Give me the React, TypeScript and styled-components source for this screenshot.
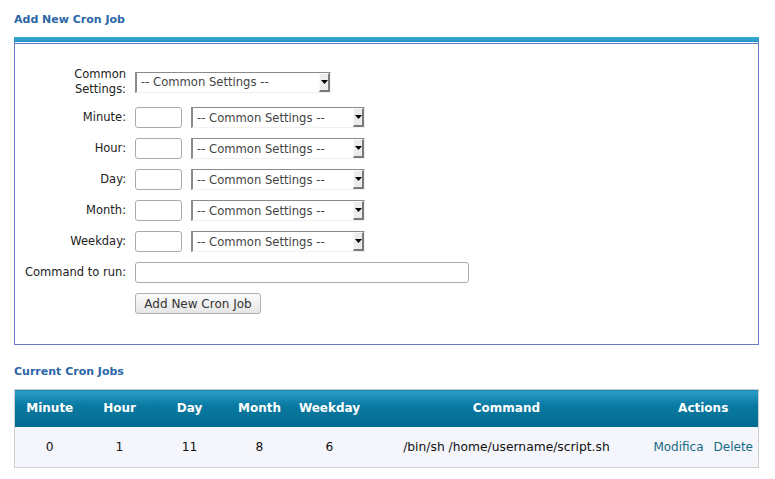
import React from 'react';
import styled, { createGlobalStyle } from 'styled-components';

const GlobalStyle = createGlobalStyle`
  body {
    margin: 0;
    background: #fff;
    font-family: "DejaVu Sans", Verdana, sans-serif;
    font-size: 11px;
    color: #222;
  }
`;

const FIELDS = ['Minute', 'Hour', 'Day', 'Month', 'Weekday'];

const JOBS = [
  { minute: '0', hour: '1', day: '11', month: '8', weekday: '6', command: '/bin/sh /home/username/script.sh' },
];

const Select = ({ width }: { width: number }) => (
  <SelectBox $width={width}>
    <SelectText>-- Common Settings --</SelectText>
    <ArrowButton>
      <svg width="7" height="4" viewBox="0 0 7 4">
        <path d="M0 0h7L3.5 4z" fill="#000" />
      </svg>
    </ArrowButton>
  </SelectBox>
);

const App = () => {
  return (
    <Page>
      <GlobalStyle />
      <SectionTitle>Add New Cron Job</SectionTitle>
      <Panel>
        <Stripe />
        <Form>
          <Label>
            Common
            <br />
            Settings:
          </Label>
          <Field>
            <Select width={196} />
          </Field>

          {FIELDS.map((f) => (
            <React.Fragment key={f}>
              <Label>{f}:</Label>
              <Field>
                <SmallInput />
                <Select width={174} />
              </Field>
            </React.Fragment>
          ))}

          <Label>Command to run:</Label>
          <Field>
            <CommandInput />
          </Field>

          <span />
          <Field>
            <Button>Add New Cron Job</Button>
          </Field>
        </Form>
      </Panel>

      <SectionTitle $top={20}>Current Cron Jobs</SectionTitle>
      <Table>
        <thead>
          <tr>
            <Th $w={70}>Minute</Th>
            <Th $w={70}>Hour</Th>
            <Th $w={70}>Day</Th>
            <Th $w={70}>Month</Th>
            <Th $w={70}>Weekday</Th>
            <Th>Command</Th>
            <Th $w={108}>Actions</Th>
          </tr>
        </thead>
        <tbody>
          {JOBS.map((j, i) => (
            <tr key={i}>
              <Td>{j.minute}</Td>
              <Td>{j.hour}</Td>
              <Td>{j.day}</Td>
              <Td>{j.month}</Td>
              <Td>{j.weekday}</Td>
              <Td>{j.command}</Td>
              <Td>
                <ActionLink href="#">Modifica</ActionLink>
                <ActionLink href="#">Delete</ActionLink>
              </Td>
            </tr>
          ))}
        </tbody>
      </Table>
    </Page>
  );
};

export default App;

const Page = styled.div`
  padding: 13px 16px 0 14px;
`;

const SectionTitle = styled.h2<{ $top?: number }>`
  margin: ${({ $top }) => $top || 0}px 0 10px;
  font-size: 11px;
  line-height: 14px;
  font-weight: bold;
  color: #2b66a6;
`;

const Panel = styled.div`
  border: 1px solid #6b7bc6;
  border-top: none;
  height: 308px;
  box-sizing: border-box;
`;

const Stripe = styled.div`
  height: 5px;
  padding-bottom: 1px;
  background: linear-gradient(#3aa9d4, #2393c2) content-box;
  border-bottom: 1px solid #6b7bc6;
  margin: 0 -1px;
`;

const Form = styled.div`
  display: grid;
  grid-template-columns: 101px 1fr;
  column-gap: 9px;
  row-gap: 10px;
  align-items: center;
  padding: 23px 0 0 10px;
`;

const Label = styled.label`
  text-align: right;
  line-height: 15px;
  font-size: 11.5px;
  color: #222;
  white-space: nowrap;
`;

const Field = styled.div`
  display: flex;
  align-items: center;
  gap: 9px;
`;

const SelectBox = styled.div<{ $width: number }>`
  position: relative;
  width: ${({ $width }) => $width}px;
  height: 21px;
  box-sizing: border-box;
  border-style: solid;
  border-width: 1px 1px 1px 2px;
  border-color: #8a8a8a #f0f0f0 #f0f0f0 #8a8a8a;
  background: #fff;
  display: flex;
  align-items: center;
  padding-left: 4px;
`;

const SelectText = styled.span`
  color: #444;
  font-size: 11.6px;
`;

const ArrowButton = styled.span`
  position: absolute;
  top: 0;
  right: 0;
  bottom: 0;
  width: 11px;
  box-sizing: border-box;
  border-style: solid;
  border-width: 1px 2px 2px 1px;
  border-color: #fafafa #7a7a7a #7a7a7a #fafafa;
  background: #ececec;
  display: flex;
  align-items: center;
  justify-content: center;
`;

const SmallInput = styled.input.attrs({ type: 'text' })`
  width: 47px;
  height: 21px;
  box-sizing: border-box;
  border: 1px solid #aaa;
  border-radius: 3px;
  padding: 0 3px;
  font: inherit;
`;

const CommandInput = styled(SmallInput)`
  width: 334px;
`;

const Button = styled.button`
  width: 126px;
  height: 21px;
  box-sizing: border-box;
  border: 1px solid #b0b0b0;
  border-radius: 3px;
  background: linear-gradient(#fbfbfb, #e6e6e6);
  font-family: "DejaVu Sans", Verdana, sans-serif;
  font-size: 12px;
  color: #333;
  padding: 0;
`;

const Table = styled.table`
  width: 745px;
  border-collapse: collapse;
  border: 1px solid #cfcfcf;
`;

const Th = styled.th<{ $w?: number }>`
  width: ${({ $w }) => ($w ? `${$w}px` : 'auto')};
  height: 37px;
  padding: 0;
  box-sizing: border-box;
  background: linear-gradient(#2a9fcb 0%, #0a7aa2 40%, #036a8f 100%);
  color: #fff;
  font-size: 12px;
  font-weight: bold;
  text-align: center;
`;

const Td = styled.td`
  height: 40px;
  padding: 0;
  background: #f5f6fb;
  text-align: center;
  font-size: 12.3px;
  color: #111;
`;

const ActionLink = styled.a`
  color: #176a85;
  text-decoration: none;
  font-size: 12px;
  margin: 0 5px;
`;
